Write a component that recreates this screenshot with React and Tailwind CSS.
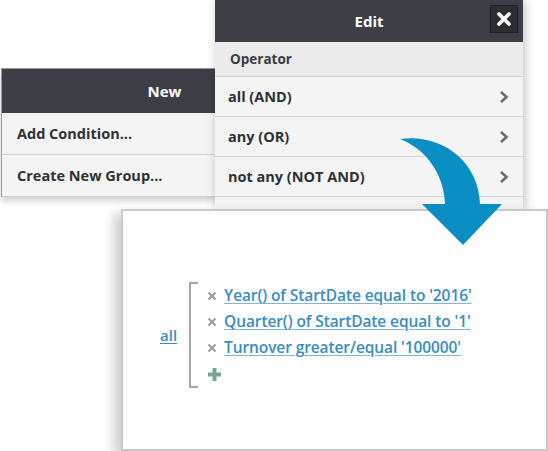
const newItems = ['Add Condition...', 'Create New Group...'];

const operators = ['all (AND)', 'any (OR)', 'not any (NOT AND)'];

const conditions = [
  "Year() of StartDate equal to '2016'",
  "Quarter() of StartDate equal to '1'",
  "Turnover greater/equal '100000'",
];

function Chevron() {
  return (
    <svg width="10" height="14" viewBox="0 0 10 14" className="shrink-0">
      <path d="M2 2 L7.5 7 L2 12" fill="none" stroke="#6b6b6b" strokeWidth="2.6" />
    </svg>
  );
}

function NewMenu() {
  return (
    <div className="absolute left-[1px] top-[68px] w-[326px] border-l border-t border-[#9a9a9a] bg-[#f4f4f4] shadow-[0_4px_6px_rgba(0,0,0,0.18)]">
      <div className="flex h-[44px] items-center justify-center bg-[#3d3e46] text-[15px] font-bold text-white">
        New
      </div>
      {newItems.map((item) => (
        <div
          key={item}
          className="flex h-[42px] items-center border-b border-[#cfcfcf] px-[15px] text-[14.5px] font-bold text-[#2f3136]"
        >
          {item}
        </div>
      ))}
    </div>
  );
}

function EditMenu() {
  return (
    <div className="absolute left-[215px] top-0 h-[210px] w-[308px] overflow-hidden bg-[#f4f4f4] shadow-[2px_0_10px_rgba(0,0,0,0.25)]">
      <div className="relative flex h-[42px] items-center justify-center bg-[#3d3e46] text-[15px] font-bold text-white">
        Edit
        <div className="absolute right-[5px] top-[5px] flex h-[28px] w-[28px] items-center justify-center border border-[#1f2025] bg-[#2c2d33]">
          <svg width="16" height="16" viewBox="0 0 16 16">
            <path d="M3 3 L13 13 M13 3 L3 13" stroke="white" strokeWidth="3.6" strokeLinecap="round" />
          </svg>
        </div>
      </div>
      <div className="flex h-[35px] items-center border-b border-[#cfcfcf] bg-[#ebebeb] px-[15px] text-[13.5px] font-bold text-[#3a3c40]">
        Operator
      </div>
      {operators.map((op) => (
        <div
          key={op}
          className="flex h-[40px] items-center justify-between border-b border-[#d3d3d3] pl-[13px] pr-[14px] text-[14.5px] font-bold text-[#2f3136]"
        >
          {op}
          <Chevron />
        </div>
      ))}
      <div className="h-[40px] border-b border-[#d3d3d3]" />
    </div>
  );
}

function Arrow() {
  return (
    <svg className="absolute left-0 top-0" width="548" height="451" viewBox="0 0 548 451">
      <path
        d="M400 139 C 440 133 479 160 480 204 L502 204 L463 245 L422 204 L445 204 C 444 176 428 150 400 139 Z"
        fill="#0a8fc4"
      />
    </svg>
  );
}

function ResultPanel() {
  return (
    <div className="absolute left-[121px] top-[209px] h-[242px] w-[427px] border-2 border-[#c9c9c9] bg-[#fdfdfd] shadow-[-8px_4px_10px_rgba(0,0,0,0.18)]">
      <div className="flex items-center pl-[37px] pt-[71px]">
        <a className="mr-[12px] text-[15px] font-semibold text-[#3a8dc1] underline underline-offset-2">all</a>
        <div className="flex">
          <div className="w-[9px] border-2 border-r-0 border-[#a6a6a6]" />
          <div className="ml-[9px] flex flex-col py-[1px]">
            {conditions.map((c) => (
              <div key={c} className="flex h-[26px] items-center gap-[7px]">
                <svg width="10" height="10" viewBox="0 0 10 10" className="shrink-0">
                  <path d="M1.5 1.5 L8.5 8.5 M8.5 1.5 L1.5 8.5" stroke="#9c9c9c" strokeWidth="2" />
                </svg>
                <a className="text-[15.5px] font-semibold tracking-[-0.1px] text-[#3a8dc1] underline decoration-[#7fb6d8] underline-offset-2">
                  {c}
                </a>
              </div>
            ))}
            <div className="flex h-[26px] items-center">
              <svg width="15" height="15" viewBox="0 0 15 15">
                <path d="M7.5 1 V14 M1 7.5 H14" stroke="#79a592" strokeWidth="4" />
              </svg>
            </div>
          </div>
        </div>
      </div>
    </div>
  );
}

export default function App() {
  return (
    <div
      className="relative h-[451px] w-[548px] overflow-hidden bg-white"
      style={{ fontFamily: '"Open Sans", "Noto Sans", sans-serif' }}
    >
      <NewMenu />
      <EditMenu />
      <ResultPanel />
      <Arrow />
    </div>
  );
}
